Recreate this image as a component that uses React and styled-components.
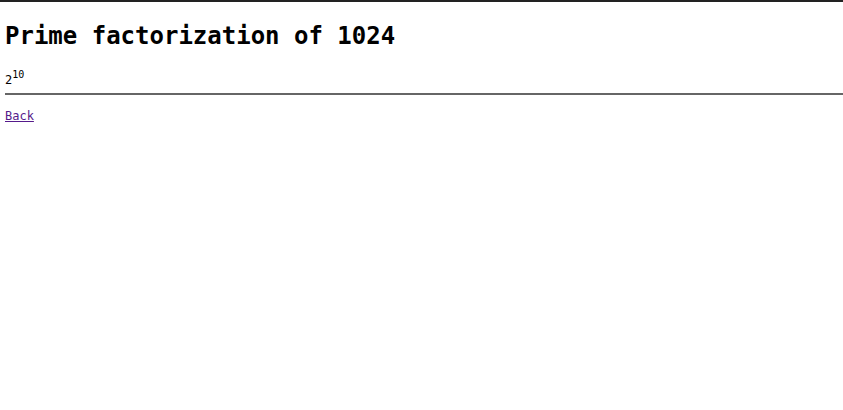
import React from 'react'
import styled, { createGlobalStyle } from 'styled-components'

const GlobalStyle = createGlobalStyle`
  html, body {
    margin: 0;
    padding: 0;
    background: #fff;
  }
  body {
    font-family: "DejaVu Sans Mono", monospace;
    font-size: 12px;
    color: #000;
  }
`

const Page = styled.main`
  border-top: 2px solid #222;
  padding-left: 5px;
`

const Title = styled.h1`
  font-size: 24px;
  font-weight: bold;
  margin: 20px 0 21px;
`

const Result = styled.p`
  margin: 0;
  font-size: 12px;
  line-height: 18px;
  sup {
    font-size: 10px;
    line-height: 0;
    vertical-align: 6px;
  }
`

const Rule = styled.hr`
  border: 0;
  border-top: 2px solid #666;
  margin: 4px 0 14px;
`

const BackLink = styled.a`
  color: #551a8b;
  font-size: 12px;
`

export default function App() {
  return (
    <>
      <GlobalStyle />
      <Page>
        <Title>Prime factorization of 1024</Title>
        <Result>
          2<sup>10</sup>
        </Result>
        <Rule />
        <BackLink href="#">Back</BackLink>
      </Page>
    </>
  )
}
